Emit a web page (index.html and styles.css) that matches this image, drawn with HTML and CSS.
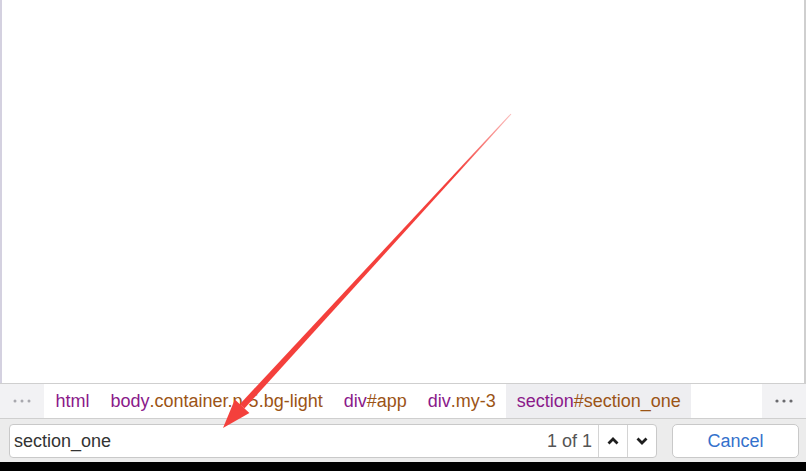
FILE: index.html
```html
<!DOCTYPE html>
<html>
<head>
<meta charset="utf-8">
<link rel="stylesheet" href="styles.css">
</head>
<body>
<div class="page">
  <div class="viewport"></div>
  <div class="crumbs">
    <div class="more more-left">
      <svg width="18" height="4" viewBox="0 0 18 4"><circle cx="2" cy="2" r="1.5"/><circle cx="9" cy="2" r="1.5"/><circle cx="16" cy="2" r="1.5"/></svg>
    </div>
    <div class="crumb"><span class="tag">html</span></div>
    <div class="crumb"><span class="tag">body</span><span class="attr">.container.p-5.bg-light</span></div>
    <div class="crumb"><span class="tag">div</span><span class="attr">#app</span></div>
    <div class="crumb"><span class="tag">div</span><span class="attr">.my-3</span></div>
    <div class="crumb selected"><span class="tag">section</span><span class="attr">#section_one</span></div>
    <div class="spacer"></div>
    <div class="more more-right">
      <svg width="18" height="4" viewBox="0 0 18 4"><circle cx="2" cy="2" r="1.6"/><circle cx="9" cy="2" r="1.6"/><circle cx="16" cy="2" r="1.6"/></svg>
    </div>
  </div>
  <div class="findbar">
    <div class="field">
      <span class="query">section_one</span>
      <span class="count">1 of 1</span>
      <button class="step">
        <svg width="12" height="8" viewBox="0 0 12 8"><path d="M1.5 6.5 L6 2 L10.5 6.5" fill="none" stroke="#1e1e1e" stroke-width="2.8"/></svg>
      </button>
      <button class="step">
        <svg width="12" height="8" viewBox="0 0 12 8"><path d="M1.5 1.5 L6 6 L10.5 1.5" fill="none" stroke="#1e1e1e" stroke-width="2.8"/></svg>
      </button>
    </div>
    <button class="cancel">Cancel</button>
  </div>
  <div class="footer"></div>
  <svg class="arrow" width="806" height="471" viewBox="0 0 806 471">
    <defs>
      <linearGradient id="fade" x1="511" y1="114" x2="242" y2="406" gradientUnits="userSpaceOnUse">
        <stop offset="0" stop-color="#f4403c" stop-opacity="0.35"/>
        <stop offset="0.2" stop-color="#f4403c" stop-opacity="1"/>
        <stop offset="1" stop-color="#f4403c"/>
      </linearGradient>
    </defs>
    <polygon points="511.4,114.3 510.6,113.7 239.8,404.2 244.4,408.5" fill="url(#fade)"/>
    <polygon points="223,428 234.8,399.6 249.4,413.0" fill="#f4403c"/>
  </svg>
</div>
</body>
</html>
```

FILE: styles.css
```css
html, body {
  margin: 0;
  padding: 0;
  background: #000;
}

.page {
  position: relative;
  width: 806px;
  height: 471px;
  display: flex;
  flex-direction: column;
  font-family: "Liberation Sans", Arial, sans-serif;
  overflow: hidden;
}

.viewport {
  height: 383px;
  background: #fff;
  border-left: 2px solid #d4d1e0;
  border-right: 2px solid #cfcfcf;
  box-sizing: border-box;
}

.crumbs {
  height: 34px;
  border-top: 1px solid #cfcfcf;
  border-bottom: 1px solid #cfcfcf;
  background: #fff;
  display: flex;
  align-items: stretch;
  font-size: 18px;
  white-space: nowrap;
}

.more {
  display: flex;
  align-items: center;
  justify-content: center;
  background: #f2f2f4;
}

.more-left {
  width: 44px;
  margin-right: 1px;
}

.more-left svg {
  fill: #a8a8ae;
}

.more-right {
  width: 44px;
}

.more-right svg {
  fill: #6a6a6e;
}

.crumb {
  display: flex;
  align-items: center;
  padding: 0 10.5px;
}

.crumb.selected {
  background: #eeeef1;
}

.tag {
  color: #8a1a8a;
}

.attr {
  color: #9b5416;
}

.spacer {
  flex: 1;
}

.findbar {
  height: 43px;
  background: #ececec;
  display: flex;
  align-items: flex-start;
  padding: 5px 7px 0 9px;
  box-sizing: border-box;
  gap: 15px;
}

.field {
  flex: 1;
  height: 34px;
  box-sizing: border-box;
  background: #fff;
  border: 1px solid #c9c9c9;
  border-radius: 4px;
  display: flex;
  align-items: stretch;
  font-size: 18px;
}

.query {
  flex: 1;
  display: flex;
  align-items: center;
  padding-left: 4px;
  color: #333;
}

.count {
  display: flex;
  align-items: center;
  color: #555;
  padding-right: 6px;
}

.step {
  width: 29px;
  border: none;
  border-left: 1px solid #d4d4d4;
  background: transparent;
  padding: 0;
  margin: 0;
  display: flex;
  align-items: center;
  justify-content: center;
}

.cancel {
  width: 127px;
  height: 34px;
  box-sizing: border-box;
  background: #fff;
  border: 1px solid #c9c9c9;
  border-radius: 5px;
  font-family: "Liberation Sans", Arial, sans-serif;
  font-size: 18px;
  color: #3471cc;
  padding: 0;
}

.footer {
  height: 9px;
  background: #000;
}

.arrow {
  position: absolute;
  left: 0;
  top: 0;
  pointer-events: none;
}
```
